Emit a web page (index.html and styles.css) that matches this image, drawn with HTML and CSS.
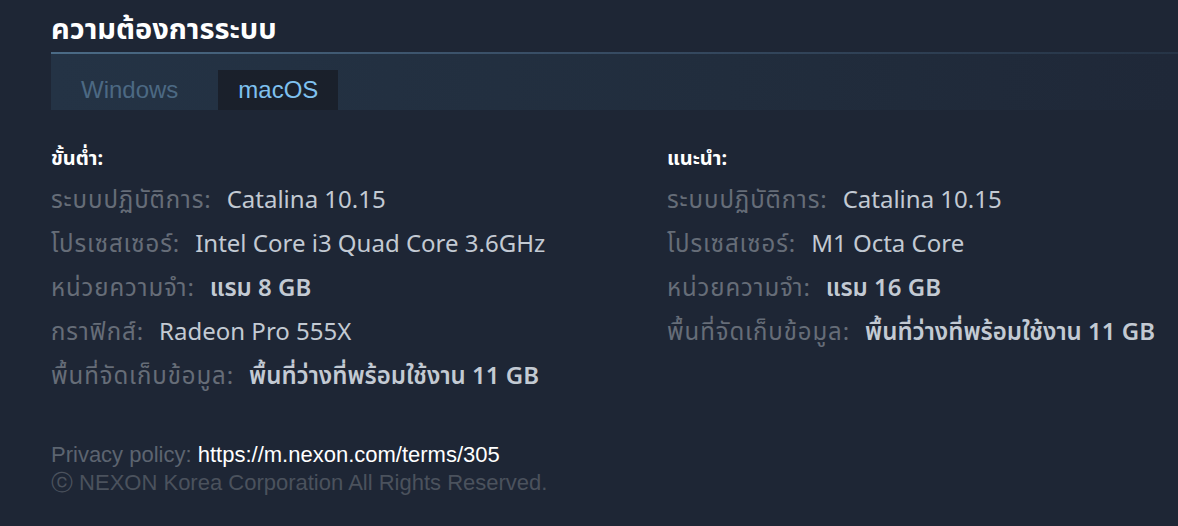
FILE: index.html
```html
<!DOCTYPE html>
<html lang="th">
<head>
    <meta charset="UTF-8">
    <meta name="viewport" content="width=device-width, initial-scale=1.0">
    <title>ความต้องการระบบ</title>
    <link rel="stylesheet" href="styles.css">
</head>
<body>
    <div class="sysreq">
        <h2 class="sysreq-title">ความต้องการระบบ</h2>

        <div class="tab-bar">
            <div class="tab">Windows</div>
            <div class="tab active">macOS</div>
        </div>

        <div class="req-columns">
            <!-- Minimum -->
            <div class="req-col">
                <div class="req-heading">ขั้นต่ำ:</div>
                <ul class="req-list">
                    <li><span class="label">ระบบปฏิบัติการ:</span><span class="value">Catalina 10.15</span></li>
                    <li><span class="label">โปรเซสเซอร์:</span><span class="value">Intel Core i3 Quad Core 3.6GHz</span></li>
                    <li><span class="label">หน่วยความจำ:</span><span class="value thai">แรม 8 GB</span></li>
                    <li><span class="label">กราฟิกส์:</span><span class="value">Radeon Pro 555X</span></li>
                    <li><span class="label">พื้นที่จัดเก็บข้อมูล:</span><span class="value thai">พื้นที่ว่างที่พร้อมใช้งาน 11 GB</span></li>
                </ul>
            </div>

            <!-- Recommended -->
            <div class="req-col">
                <div class="req-heading">แนะนำ:</div>
                <ul class="req-list">
                    <li><span class="label">ระบบปฏิบัติการ:</span><span class="value">Catalina 10.15</span></li>
                    <li><span class="label">โปรเซสเซอร์:</span><span class="value">M1 Octa Core</span></li>
                    <li><span class="label">หน่วยความจำ:</span><span class="value thai">แรม 16 GB</span></li>
                    <li><span class="label">พื้นที่จัดเก็บข้อมูล:</span><span class="value thai">พื้นที่ว่างที่พร้อมใช้งาน 11 GB</span></li>
                </ul>
            </div>
        </div>

        <div class="legal">
            <p>Privacy policy: <a href="#" class="legal-link">https://m.nexon.com/terms/305</a></p>
            <p class="copyright">ⓒ NEXON Korea Corporation All Rights Reserved.</p>
        </div>
    </div>
</body>
</html>
```

FILE: styles.css
```css
* {
    margin: 0;
    padding: 0;
    box-sizing: border-box;
}

body {
    background-color: #1e2635;
    font-family: "Noto Sans", "Noto Sans Thai", sans-serif;
    overflow: hidden;
}

.sysreq {
    padding-left: 51px;
}

.sysreq-title {
    color: #ffffff;
    font-size: 29px;
    font-weight: bold;
    line-height: 36px;
    padding: 10px 0 6px;
}

/* tab strip under the title */
.tab-bar {
    display: flex;
    gap: 20px;
    padding-top: 16px;
    border-top: 2px solid #3f5a73;
    border-image: linear-gradient(to right, #4b6b86 0%, #3a5068 40%, #263446 100%) 1;
    background: linear-gradient(to right, #243345 0%, #212d3d 60%, #1f2838 100%);
}

.tab {
    font-family: "Liberation Sans", Arial, sans-serif;
    font-size: 24px;
    line-height: 40px;
    padding: 0 20px;
    color: #4c6983;
}

.tab:first-child {
    margin-left: 10px;
}

.tab.active {
    background-color: #1a202b;
    color: #7fc1ef;
}

.req-columns {
    display: grid;
    grid-template-columns: 616px 1fr;
    padding-top: 36px;
}

.req-heading {
    color: #ffffff;
    font-size: 20px;
    font-weight: bold;
    line-height: 24px;
    margin-bottom: 7px;
}

.req-list {
    list-style: none;
}

.req-list li {
    font-size: 24px;
    line-height: 44px;
    white-space: nowrap;
}

.label {
    color: #666d78;
    letter-spacing: 0.9px;
}

.value {
    color: #c3cad3;
    margin-left: 15px;
}

.value.thai {
    font-weight: 600;
}

.legal {
    margin-top: 44px;
    font-family: "Liberation Sans", Arial, sans-serif;
    font-size: 22px;
    line-height: 28px;
    color: #5c6470;
}

.legal-link {
    color: #ffffff;
    text-decoration: none;
}

.copyright {
    color: #4b525d;
}
```
